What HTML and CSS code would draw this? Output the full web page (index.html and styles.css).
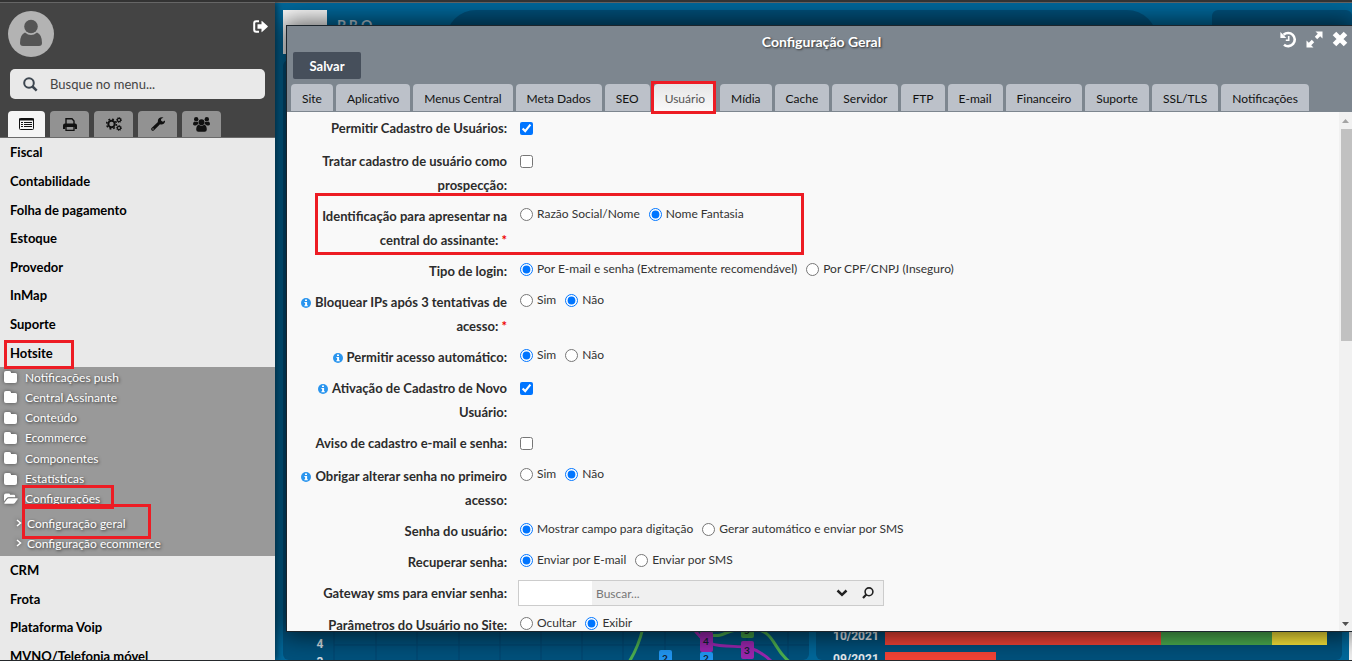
FILE: index.html
```html
<!DOCTYPE html>
<html lang="pt-BR">
<head>
<meta charset="utf-8">
<title>Configuração Geral</title>
<link rel="stylesheet" href="styles.css">
</head>
<body>
<svg width="0" height="0" class="defs" aria-hidden="true">
  <symbol id="folder" viewBox="0 0 14 12"><path d="M2 0h3.500q1.500 0 1.500 1.500V2h4.500Q13 2 13 3.500v6.500q0 2-2 2H2q-2 0-2-2V2Q0 0 2 0z"/></symbol>
  <symbol id="folder-open" viewBox="0 0 15 12"><path d="M2 0h3q1.500 0 1.500 1.500h4Q12 1.500 12 3v1.200H5q-1.500 0-2.500 1.200L0 8.500V2Q0 0 2 0zM5 5.200h9q1.500 0 .5 1.200l-2.900 3.800q-.6.8-1.800.8H1q-1.300 0-.5-1.100L3.200 6.200Q4 5.200 5 5.200z"/></symbol>
  <symbol id="info" viewBox="0 0 10 10"><circle cx="5" cy="5" r="5" fill="#2a95ee"/><path fill="#fff" d="M4 1.500h2v1.600H4zM3.400 4h2.700v3.200h.7v1.100H3.400V7.200h.7V5h-.7z"/></symbol>
  <symbol id="chev" viewBox="0 0 6 8"><path d="M1 1l3.500 3L1 7" fill="none" stroke="#fff" stroke-width="1.500"/></symbol>
</svg>

<div class="app">
  <aside class="sidebar">
    <header class="side-head">
      <div class="user-row">
        <svg class="avatar" viewBox="0 0 46 46" role="img" aria-label="Usuário"><circle cx="23" cy="23" r="23" fill="#b3b3b3"/><circle cx="23" cy="15.500" r="6.800" fill="#555"/><path fill="#555" d="M17 21.500q6 5 12 0 5 2 5 10.500 0 3-3 3H15q-3 0-3-3 0-8.500 5-10.500z"/></svg>
        <button class="icon-btn" aria-label="Sair"><svg width="15" height="13" viewBox="0 0 15 13"><path d="M6 1.200H3.200Q1.200 1.200 1.200 3.200v6.600q0 2 2 2H6" fill="none" stroke="#fff" stroke-width="2"/><path fill="#fff" d="M4.500 4.200h4V1.200Q8.500.6 9 1l5.600 5q.5.500 0 1L9 12q-.5.400-.5-.2V8.800h-4z"/></svg></button>
      </div>
      <label class="search">
        <svg width="15" height="15" viewBox="0 0 15 15" fill="none" stroke="#3d4650"><circle cx="6" cy="6" r="4.800" stroke-width="2"/><path d="M9.500 9.500l4.200 4.200" stroke-width="2.500"/></svg>
        <input type="text" placeholder="Busque no menu..." aria-label="Busque no menu">
      </label>
      <nav class="side-tabs">
        <button class="on" aria-label="Menu"><svg width="15" height="12" viewBox="0 0 15 12"><rect x=".5" y=".5" width="14" height="11" rx="1" fill="none" stroke="#111"/><path d="M.5 1.500h14M2 4.500h2M2 6.500h2M2 8.500h2M5 4.500h8M5 6.500h8M5 8.500h8" stroke="#111"/><path d="M0 1.500h15" stroke="#111" stroke-width="2"/></svg></button>
        <button aria-label="Imprimir"><svg width="14" height="13" viewBox="0 0 14 13"><path d="M3 6V.8h6L11 3v3" fill="none" stroke="#111" stroke-width="1.400"/><path fill="#111" d="M2 5.500h10q2 0 2 2V11h-2.300V9H2.300v2H0V7.500q0-2 2-2z"/><path d="M3 9v3.300h8V9" fill="none" stroke="#111" stroke-width="1.300"/></svg></button>
        <button aria-label="Configurações"><svg width="16" height="14" viewBox="0 0 16 14" fill="none" stroke="#111"><circle cx="5.500" cy="7" r="3.200" stroke-width="2"/><circle cx="5.500" cy="7" r="4.900" stroke-width="1.500" stroke-dasharray="1.900 1.950"/><circle cx="13" cy="3" r="1.600" stroke-width="1.200"/><circle cx="13" cy="3" r="2.500" stroke-width="1" stroke-dasharray="1 .96"/><circle cx="13" cy="11" r="1.600" stroke-width="1.200"/><circle cx="13" cy="11" r="2.500" stroke-width="1" stroke-dasharray="1 .96"/></svg></button>
        <button aria-label="Ferramentas"><svg width="14" height="14" viewBox="0 0 14 14"><path fill="#111" d="M12.500 0.600L10 2l.2 1.800 1.700.9L14 3.400q.2 2.200-1.300 3.400-1.600 1.200-3.700.5L3 13.300q-1.200 1-2.400 0-1-1.200 0-2.400L6.900 4.900Q6.500 2.600 8 1.300 10-.4 12.500.6z"/><circle cx="2" cy="12" r=".7" fill="#929292"/></svg></button>
        <button aria-label="Usuários"><svg width="17" height="15" viewBox="0 0 17 15" fill="#111"><circle cx="8.500" cy="5.200" r="3"/><circle cx="3.200" cy="2.300" r="2.200"/><circle cx="13.800" cy="2.300" r="2.200"/><path d="M5.800 7.800q2.700 2 5.400 0 2.600.8 2.600 4.700 0 2.200-2.200 2.200H5.400q-2.200 0-2.200-2.200 0-3.900 2.600-4.700zM1.500 4.500q1.800 1 3.400.2 0 1.700.8 2.500-1.500 0-2.600 1.200H1.500Q0 8.400 0 7q0-2 1.500-2.500zM15.500 4.500q-1.800 1-3.400.2 0 1.700-.8 2.500 1.500 0 2.600 1.200h1.600Q17 8.400 17 7q0-2-1.500-2.500z"/></svg></button>
      </nav>
    </header>
    <nav class="menu">
      <ul class="modules eight">
        <li><a href="#">Fiscal</a></li><li><a href="#">Contabilidade</a></li><li><a href="#">Folha de pagamento</a></li><li><a href="#">Estoque</a></li><li><a href="#">Provedor</a></li><li><a href="#">InMap</a></li><li><a href="#">Suporte</a></li><li class="mark mark-hotsite"><a href="#">Hotsite</a></li>
      </ul>
      <div class="sub">
        <ul class="folders">
          <li><a href="#"><svg><use href="#folder"/></svg>Notificações push</a></li>
          <li><a href="#"><svg><use href="#folder"/></svg>Central Assinante</a></li>
          <li><a href="#"><svg><use href="#folder"/></svg>Conteúdo</a></li>
          <li><a href="#"><svg><use href="#folder"/></svg>Ecommerce</a></li>
          <li><a href="#"><svg><use href="#folder"/></svg>Componentes</a></li>
          <li><a href="#"><svg><use href="#folder"/></svg>Estatísticas</a></li>
          <li class="mark mark-config"><a href="#"><svg><use href="#folder-open"/></svg>Configurações</a></li>
        </ul>
        <ul class="pages">
          <li class="mark mark-geral"><a href="#"><svg><use href="#chev"/></svg>Configuração geral</a></li>
          <li><a href="#"><svg><use href="#chev"/></svg>Configuração ecommerce</a></li>
        </ul>
      </div>
      <ul class="modules four">
        <li><a href="#">CRM</a></li><li><a href="#">Frota</a></li><li><a href="#">Plataforma Voip</a></li><li><a href="#">MVNO/Telefonia móvel</a></li>
      </ul>
    </nav>
  </aside>

  <main class="desk">
    <div class="dash">
      <header class="dash-top">
        <div class="logo"></div><span class="brand">P R O —</span><div class="pill"></div><div class="card user-card"></div>
      </header>
      <div class="dash-cards">
        <section class="card chart">
          <svg class="lines" width="527" height="32" viewBox="0 -4 527 32">
            <path stroke="#00456e" d="M51-4v32M93-4v32M134-4v32M176-4v32M217-4v32M258-4v32M299-4v32M340-4v32M382-4v32M423-4v32M464-4v32M505-4v32M51 13h475"/>
            <g transform="translate(3)">
              <g fill="none" stroke-width="3"><path d="M357-4q-5 20-14 34M423 3c20 3 12-6 40-6s22 20 42 34" stroke="#4caf50"/><path d="M406-6c14 24 30 19 55 21q14 4 24 14" stroke="#9c27b0"/></g>
              <rect x="414" y="-8" width="13" height="9" fill="#43a047"/><rect x="455" y="-10" width="13" height="16" rx="2" fill="#43a047"/>
              <rect x="414" y="0" width="13" height="20" rx="2" fill="#9c27b0"/><rect x="455" y="9" width="13" height="18" rx="2" fill="#9c27b0"/>
              <rect x="373" y="18" width="13" height="16" rx="2" fill="#2196f3"/><rect x="414" y="20" width="13" height="14" rx="2" fill="#2196f3"/>
              <g class="node" text-anchor="middle"><text x="461" y="2">5</text><text x="420" y="13">4</text><text x="461" y="22">3</text><text x="379" y="30">2</text><text x="420" y="30">2</text></g>
            </g>
            <g class="axis" text-anchor="middle"><text x="37" y="16">4</text><text x="37" y="34">3</text></g>
          </svg>
        </section>
        <section class="card bars">
          <div class="bar-row"><span>10/2021</span><div class="track"><i class="red" style="width:60.400%"></i><i class="green" style="width:24.300%"></i><i class="yellow" style="width:12%"></i></div></div>
          <div class="bar-row"><span>09/2021</span><div class="track"><i class="red" style="width:24.300%"></i></div></div>
        </section>
      </div>
    </div>

    <section class="modal" role="dialog" aria-labelledby="title">
      <header class="modal-head">
        <h1 id="title">Configuração Geral</h1>
        <div class="win-btns">
          <button class="icon-btn" aria-label="Histórico"><svg width="17" height="17" viewBox="0 0 17 17"><path d="M3.600 3.800A6.600 6.600 0 1 1 4 13.700" fill="none" stroke="#fff" stroke-width="2.600"/><path fill="#fff" d="M.4 1v6h6z"/><path d="M8.700 5v4.300H5.800" fill="none" stroke="#fff" stroke-width="1.600"/></svg></button>
          <button class="icon-btn" aria-label="Maximizar"><svg width="17" height="17" viewBox="0 0 17 17"><path fill="#fff" d="M9.500.5h7v7l-2.300-2.300-3 3-2.400-2.400 3-3zM7.500 16.500h-7v-7l2.300 2.300 3-3 2.400 2.400-3 3z"/></svg></button>
          <button class="icon-btn" aria-label="Fechar"><svg width="16" height="16" viewBox="0 0 16 16"><path d="M2.500 2.500l11 11M13.500 2.500l-11 11" stroke="#fff" stroke-width="5"/></svg></button>
        </div>
      </header>
      <div class="toolbar"><button class="save">Salvar</button></div>
      <nav class="tabs">
        <button>Site</button><button>Aplicativo</button><button>Menus Central</button><button>Meta Dados</button><button>SEO</button><button class="on mark mark-tab">Usuário</button><button>Mídia</button><button>Cache</button><button>Servidor</button><button>FTP</button><button>E-mail</button><button>Financeiro</button><button>Suporte</button><button>SSL/TLS</button><button>Notificações</button>
      </nav>
      <div class="content">
        <form class="form">
          <div class="row check"><label class="lbl" for="c1">Permitir Cadastro de Usuários:</label><div class="field"><input type="checkbox" id="c1" checked></div></div>
          <div class="row check tall"><label class="lbl" for="c2">Tratar cadastro de usuário como prospecção:</label><div class="field"><input type="checkbox" id="c2"></div></div>
          <div class="row mark mark-ident"><span class="lbl">Identificação para apresentar na central do assinante: <em>*</em></span><div class="field"><label><input type="radio" name="r1">Razão Social/Nome</label><label><input type="radio" name="r1" checked>Nome Fantasia</label></div></div>
          <div class="row"><span class="lbl">Tipo de login:</span><div class="field"><label><input type="radio" name="r2" checked>Por E-mail e senha (Extremamente recomendável)</label><label><input type="radio" name="r2">Por CPF/CNPJ (Inseguro)</label></div></div>
          <div class="row"><span class="lbl"><svg><use href="#info"/></svg>Bloquear IPs após 3 tentativas de acesso: <em>*</em></span><div class="field"><label><input type="radio" name="r3">Sim</label><label><input type="radio" name="r3" checked>Não</label></div></div>
          <div class="row"><span class="lbl"><svg><use href="#info"/></svg>Permitir acesso automático:</span><div class="field"><label><input type="radio" name="r4" checked>Sim</label><label><input type="radio" name="r4">Não</label></div></div>
          <div class="row check tall"><label class="lbl" for="c3"><svg><use href="#info"/></svg>Ativação de Cadastro de Novo Usuário:</label><div class="field"><input type="checkbox" id="c3" checked></div></div>
          <div class="row check"><label class="lbl" for="c4">Aviso de cadastro e-mail e senha:</label><div class="field"><input type="checkbox" id="c4"></div></div>
          <div class="row"><span class="lbl"><svg><use href="#info"/></svg>Obrigar alterar senha no primeiro acesso:</span><div class="field"><label><input type="radio" name="r5">Sim</label><label><input type="radio" name="r5" checked>Não</label></div></div>
          <div class="row"><span class="lbl">Senha do usuário:</span><div class="field"><label><input type="radio" name="r6" checked>Mostrar campo para digitação</label><label><input type="radio" name="r6">Gerar automático e enviar por SMS</label></div></div>
          <div class="row"><span class="lbl">Recuperar senha:</span><div class="field"><label><input type="radio" name="r7" checked>Enviar por E-mail</label><label><input type="radio" name="r7">Enviar por SMS</label></div></div>
          <div class="row"><label class="lbl" for="gw">Gateway sms para enviar senha:</label><div class="combo"><input type="text" class="code" aria-label="Código"><input type="text" id="gw" class="find" placeholder="Buscar..."><button type="button" aria-label="Abrir lista"><svg width="12" height="8" viewBox="0 0 12 8"><path d="M1.500 1.500L6 5.800l4.500-4.300" fill="none" stroke="#222" stroke-width="2.500"/></svg></button><button type="button" aria-label="Pesquisar"><svg width="12" height="12" viewBox="0 0 12 12" fill="none" stroke="#222"><circle cx="7" cy="4.800" r="3.900" stroke-width="1.600"/><path d="M4.300 7.600L1 11" stroke-width="2.200"/></svg></button></div></div>
          <div class="row"><span class="lbl">Parâmetros do Usuário no Site:</span><div class="field"><label><input type="radio" name="r8">Ocultar</label><label><input type="radio" name="r8" checked>Exibir</label></div></div>
        </form>
        <div class="scroll"><svg width="7" height="4" viewBox="0 0 7 4"><path d="M0 4h7L3.500 0z" fill="#a3a3a3"/></svg><div class="thumb"></div><svg width="7" height="4" viewBox="0 0 7 4"><path d="M0 0h7L3.500 4z" fill="#505050"/></svg></div>
      </div>
    </section>
  </main>
</div>
</body>
</html>
```
FILE: styles.css
```css
*, *::after { box-sizing: border-box; }
body { margin: 0; font-family: Lato, "Noto Sans", sans-serif; font-size: 12px; color: #333; }
ul { list-style: none; margin: 0; padding: 0; }
a { color: inherit; text-decoration: none; }
button, input { font: inherit; color: inherit; }
button { border: 0; background: none; padding: 0; }
.defs { position: absolute; }

.app {
  height: 100vh; overflow: hidden;
  display: grid; grid-template-columns: 275px 1fr;
  border-top: 2px solid #333; border-bottom: 1px solid #25282b;
}

/* Red highlight frames */
.mark { position: relative; }
.mark::after { content: ""; position: absolute; border: 3px solid #ed1c24; pointer-events: none; z-index: 2; }
.mark-hotsite::after { inset: 2px 201px -2px 4px; }
.mark-config::after { inset: -4px 161px 0 22px; }
.mark-geral::after { inset: -9px 124px -6px 22px; }
.mark-tab::after { inset: -3px 0 -3px -3px; }
.mark-ident::after { inset: -11px auto 4px 22px; width: 489px; }

/* Sidebar */
.sidebar { background: #e9e9e9; border-top: 1px solid #666; overflow: hidden; box-shadow: 2px 0 6px rgba(0,0,0,.5); z-index: 1; }
.side-head { background: #444; padding: 8px 10px 0; border-bottom: 1px solid #6a6a6a; }
.user-row { display: flex; justify-content: space-between; align-items: flex-start; margin-left: -2px; }
.avatar { width: 46px; height: 46px; }
.user-row .icon-btn { margin: 9px -3px 0 0; }
.icon-btn svg { display: block; }
.search { display: flex; align-items: center; gap: 12px; height: 30px; margin-top: 12px; padding-left: 13px; background: #e9e9e9; border-radius: 5px; }
.search input { border: 0; background: none; outline: 0; width: 200px; padding: 0; font-size: 13px; }
.search input::placeholder { color: #444; }
.side-tabs { display: flex; gap: 5px; margin: 12px 0 0 -2px; height: 26px; }
.side-tabs button { flex: 0 0 39px; display: grid; place-items: center; background: #929292; border-radius: 4px 4px 0 0; }
.side-tabs button.on { flex-basis: 37px; background: #f5f5f5; }
.modules { display: grid; grid-auto-rows: 1fr; font-size: 13px; font-weight: 700; color: #000; }
.modules li { display: flex; align-items: center; padding-left: 10px; }
.modules.eight { min-height: 229px; }
.modules.four { min-height: 114px; }
.sub { background: #999; color: #fff; padding: 0 0 3px; text-shadow: 1px 1px 3px rgba(0,0,0,.7); }
.sub a { display: flex; align-items: center; gap: 7px; }
.sub svg { width: 14px; height: 12px; fill: #fff; filter: drop-shadow(0 0 2px rgba(0,0,0,.5)); }
.folders { display: grid; grid-auto-rows: 1fr; min-height: 142px; }
.folders li { display: flex; align-items: center; padding-left: 4px; }
.pages { padding-top: 4px; }
.pages a { height: 20px; padding-left: 16px; gap: 5px; }
.pages svg { width: 6px; height: 8px; }

/* Dashboard behind the window */
.desk { position: relative; background: #00689b; border-top: 1px solid #666; min-width: 0; }
.dash { position: absolute; inset: 0; display: flex; flex-direction: column; padding: 7px 0 0 8px; overflow: hidden; }
.dash-top { display: flex; height: 44px; }
.logo { width: 44px; background: #fff; }
.brand { margin: 6px 51px 0 10px; color: #b4c6d2; font-size: 14px; font-weight: 700; white-space: nowrap; width: 58px; }
.pill { flex: 1; height: 60px; border-radius: 30px; background: #00507b; margin-right: 55px; }
.user-card { width: 140px; }
.card { background: #00517c; border-radius: 6px; }
.dash-cards { flex: 1; min-height: 0; display: flex; gap: 7px; padding-top: 6px; border-right: 3px solid #eee; padding-right: 7px; }
.chart { flex: 0 0 526px; display: flex; align-items: flex-end; overflow: hidden; }
.bars { flex: 1; display: flex; flex-direction: column; justify-content: flex-end; gap: 7px; padding-left: 17px; overflow: hidden; }
.lines { display: block; height: 32px; overflow: visible; }
.node { font-size: 10px; font-weight: 700; fill: #123; }
.axis { font-size: 12px; font-weight: 700; fill: #d5dde2; font-family: Roboto, sans-serif; }
.bar-row { display: flex; align-items: center; height: 13px; gap: 10px; color: #e4eaee; font: 700 12px Roboto, sans-serif; }
.bar-row:last-child { margin-bottom: -5px; }
.bar-row:first-child { height: 18px; }
.bar-row span { width: 42px; white-space: nowrap; }
.track { flex: 1; display: flex; align-self: stretch; }
.red { background: #f44336; }
.green { background: #4caf50; }
.yellow { background: #ffeb3b; }

/* Settings window */
.modal {
  position: absolute; inset: 22px 0 28px 11px;
  display: flex; flex-direction: column;
  background: #7d868f; border: 1px solid #1c252c; border-right: 0;
  box-shadow: 0 0 24px 4px rgba(0,0,0,.65);
}
.modal-head { display: grid; grid-template-columns: 1fr; align-items: center; height: 26px; }
.modal-head h1 { grid-area: 1 / 1; margin: 0; padding: 6px 0 0 4px; text-align: center; font-size: 14px; line-height: 20px; color: #fff; text-shadow: 1px 1px 2px #333; }
.win-btns { grid-area: 1 / 1; justify-self: end; display: flex; gap: 9px; padding-right: 4px; z-index: 1; }
.toolbar { padding: 0 6px; }
.save { display: block; width: 68px; height: 27px; padding-top: 1px; background: #464f5b; border-radius: 2px; color: #fff; font-size: 13px; font-weight: 700; }
.tabs { display: flex; gap: 3px; padding: 5px 4px 0; height: 33px; border-bottom: 1px solid #7d868f; }
.tabs button { height: 27px; padding: 1px 11px 0; background: #bcc1c9; color: #111; border-radius: 4px 4px 0 0; white-space: nowrap; }
.tabs button.on { margin: 0 1px; background: linear-gradient(#e6e6e6, #f9f9f9); color: #555; }
.content { flex: 1; min-height: 0; display: flex; background: #f9f9f9; }
.form { flex: 1; min-width: 0; overflow: hidden; padding: 4px 0 0 6px; }
.row { display: grid; grid-template-columns: 214px 1fr; column-gap: 13px; padding-bottom: 7px; align-items: start; }
.row.check { padding-bottom: 9px; }
.row.check.tall { padding-bottom: 7px; }
.lbl { text-align: right; font-size: 13px; font-weight: 700; line-height: 24px; color: #2c2c2c; }
.lbl svg { width: 10px; height: 10px; margin-right: 4px; vertical-align: -1px; }
.lbl em { color: #e00; font-style: normal; }
.field { display: flex; align-items: center; gap: 9px; min-height: 20px; }
.field label { display: flex; align-items: center; gap: 4px; line-height: 20px; white-space: nowrap; }
.field input { width: 13px; height: 13px; margin: 0; accent-color: #0075ff; }
.check .field { min-height: 24px; }
.combo { display: flex; width: 366px; height: 26px; margin: -1px 0 0 -2px; border: 1px solid #ccc; background: #f0f0f0; }
.combo input { border: 0; outline: 0; padding: 0 4px; min-width: 0; background: none; }
.combo .code { width: 73px; background: #fff; }
.combo .find { flex: 1; }
.combo .find::placeholder { color: #777; }
.combo button { width: 26px; display: grid; place-items: center; }
.combo button:last-child { margin-right: 2px; }
.scroll { flex: 0 0 13px; display: flex; flex-direction: column; align-items: center; background: #f1f1f1; padding: 7px 0 5px; }
.thumb { width: 11px; height: 212px; margin: 6px 0 auto; background: #c1c1c1; align-self: flex-end; }
```
